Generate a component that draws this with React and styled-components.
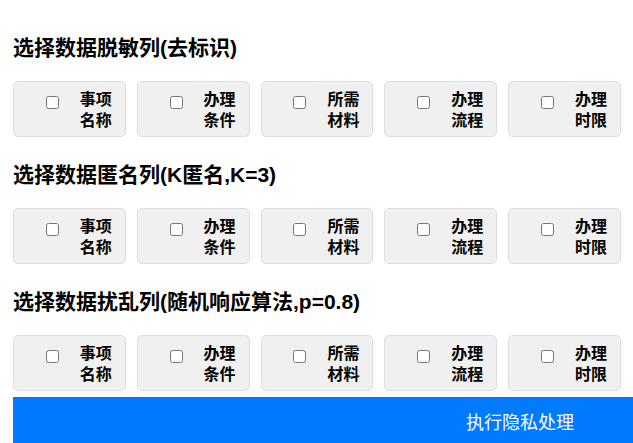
import React from "react";
import styled, { createGlobalStyle } from "styled-components";

const Global = createGlobalStyle`
  html, body { margin: 0; padding: 0; background: #fff; }
  body { font-family: "Liberation Sans", "Noto Sans CJK SC", sans-serif; color: #000; }
`;

const Page = styled.div`
  padding: 34px 0 0 13px;
  width: 608px;
`;

const Section = styled.section`
  margin-bottom: 24px;
  &:last-of-type { margin-bottom: 6px; }
`;

const Title = styled.h3`
  margin: 0 0 19px;
  font-size: 21px;
  line-height: 28px;
  font-weight: 700;
  white-space: nowrap;
`;

const Grid = styled.div`
  display: grid;
  grid-template-columns: repeat(5, 1fr);
  gap: 11px;
`;

const Card = styled.label`
  display: flex;
  justify-content: flex-end;
  align-items: flex-start;
  gap: 21px;
  height: 56px;
  box-sizing: border-box;
  padding: 7px 13px 0 0;
  background: #f0f0f0;
  border: 1px solid #dedede;
  border-radius: 5px;
`;

const Box = styled.input`
  margin: 7px 0 0;
  width: 13px;
  height: 13px;
`;

const Label = styled.span`
  width: 32px;
  font-size: 16px;
  font-weight: 700;
  line-height: 21px;
  text-align: right;
`;

const Action = styled.button`
  display: block;
  width: 620px;
  height: 48px;
  box-sizing: border-box;
  border: none;
  background: #007bff;
  color: #fff;
  font-family: "Liberation Sans", "Noto Sans CJK SC", sans-serif;
  font-size: 18px;
  padding: 0 0 0 394px;
  text-align: center;
  cursor: pointer;
`;

const cols = ["事项名称", "办理条件", "所需材料", "办理流程", "办理时限"];
const sections = [
  "选择数据脱敏列(去标识)",
  "选择数据匿名列(K匿名,K=3)",
  "选择数据扰乱列(随机响应算法,p=0.8)",
];

export default function App() {
  return (
    <>
      <Global />
      <Page>
        {sections.map((s) => (
          <Section key={s}>
            <Title>{s}</Title>
            <Grid>
              {cols.map((c) => (
                <Card key={c}>
                  <Box type="checkbox" />
                  <Label>{c}</Label>
                </Card>
              ))}
            </Grid>
          </Section>
        ))}
        <Action>执行隐私处理</Action>
      </Page>
    </>
  );
}
